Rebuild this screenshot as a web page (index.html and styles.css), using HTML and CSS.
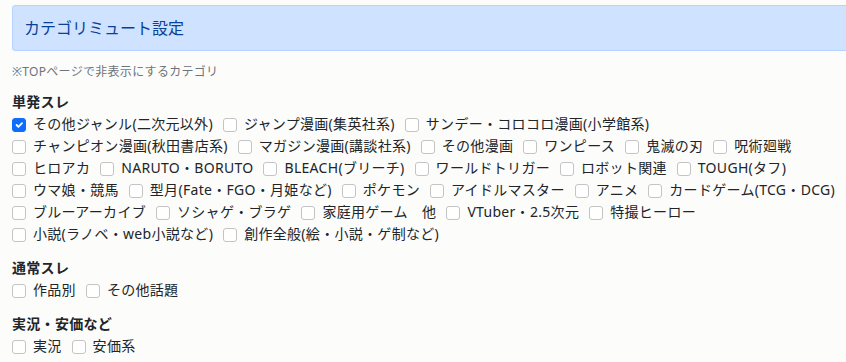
FILE: index.html
```html
<!DOCTYPE html>
<html>
<head>
  <title>カテゴリミュート設定</title>
  <link rel="stylesheet" href="styles.css">
</head>
<body>
  <div id="mute-settings">
    <div class="title-box">カテゴリミュート設定</div>
    <p class="note">※TOPページで非表示にするカテゴリ</p>

    <div class="group">
      <h2>単発スレ</h2>
      <div class="options">
        <label class="opt"><input type="checkbox" checked>その他ジャンル(二次元以外)</label>
        <label class="opt"><input type="checkbox">ジャンプ漫画(集英社系)</label>
        <label class="opt"><input type="checkbox">サンデー・コロコロ漫画(小学館系)</label>
        <label class="opt"><input type="checkbox">チャンピオン漫画(秋田書店系)</label>
        <label class="opt"><input type="checkbox">マガジン漫画(講談社系)</label>
        <label class="opt"><input type="checkbox">その他漫画</label>
        <label class="opt"><input type="checkbox">ワンピース</label>
        <label class="opt"><input type="checkbox">鬼滅の刃</label>
        <label class="opt"><input type="checkbox">呪術廻戦</label>
        <label class="opt"><input type="checkbox">ヒロアカ</label>
        <label class="opt"><input type="checkbox">NARUTO・BORUTO</label>
        <label class="opt"><input type="checkbox">BLEACH(ブリーチ)</label>
        <label class="opt"><input type="checkbox">ワールドトリガー</label>
        <label class="opt"><input type="checkbox">ロボット関連</label>
        <label class="opt"><input type="checkbox">TOUGH(タフ)</label>
        <label class="opt"><input type="checkbox">ウマ娘・競馬</label>
        <label class="opt"><input type="checkbox">型月(Fate・FGO・月姫など)</label>
        <label class="opt"><input type="checkbox">ポケモン</label>
        <label class="opt"><input type="checkbox">アイドルマスター</label>
        <label class="opt"><input type="checkbox">アニメ</label>
        <label class="opt"><input type="checkbox">カードゲーム(TCG・DCG)</label>
        <label class="opt"><input type="checkbox">ブルーアーカイブ</label>
        <label class="opt"><input type="checkbox">ソシャゲ・ブラゲ</label>
        <label class="opt"><input type="checkbox">家庭用ゲーム　他</label>
        <label class="opt"><input type="checkbox">VTuber・2.5次元</label>
        <label class="opt"><input type="checkbox">特撮ヒーロー</label>
        <label class="opt"><input type="checkbox">小説(ラノベ・web小説など)</label>
        <label class="opt"><input type="checkbox">創作全般(絵・小説・ゲ制など)</label>
      </div>
    </div>

    <div class="group">
      <h2>通常スレ</h2>
      <div class="options">
        <label class="opt"><input type="checkbox">作品別</label>
        <label class="opt"><input type="checkbox">その他話題</label>
      </div>
    </div>

    <div class="group">
      <h2>実況・安価など</h2>
      <div class="options">
        <label class="opt"><input type="checkbox">実況</label>
        <label class="opt"><input type="checkbox">安価系</label>
      </div>
    </div>
  </div>
</body>
</html>
```

FILE: styles.css
```css
body {
  margin: 0;
  background-color: #fcfcfa;
  color: #212529;
  font-family: "Noto Sans", "Noto Sans CJK JP", sans-serif;
  font-size: 14px;
  letter-spacing: 0.3px;
  overflow: hidden;
}
#mute-settings {
  padding: 5px 4px 0 12px;
}
.title-box {
  height: 44px;
  margin-right: -30px;
  padding: 0 11px;
  line-height: 44px;
  font-size: 16px;
  letter-spacing: 0;
  color: #084298;
  background-color: #cfe2ff;
  border: 1px solid #b6d4fe;
  border-radius: 3px;
}
.note {
  margin: 12px 0 0;
  line-height: 18px;
  font-size: 12px;
  color: #6c757d;
}
.group {
  margin-top: 10px;
}
.group + .group {
  margin-top: 12px;
}
.group h2 {
  margin: 0;
  line-height: 22px;
  font-size: 14px;
  font-weight: bold;
}
.options {
  display: flex;
  flex-wrap: wrap;
  column-gap: 10px;
}
.opt {
  display: flex;
  align-items: center;
  line-height: 22px;
  white-space: nowrap;
}
.opt input {
  appearance: none;
  width: 14px;
  height: 14px;
  margin: 1px 7px 0 0;
  background-color: #fff;
  border: 1px solid #c4c4c4;
  border-radius: 3px;
}
.opt input:checked {
  background-color: #0d6efd;
  border-color: #0d6efd;
  background-image: url("data:image/svg+xml,%3csvg xmlns='http://www.w3.org/2000/svg' viewBox='0 0 20 20'%3e%3cpath fill='none' stroke='%23fff' stroke-linecap='round' stroke-linejoin='round' stroke-width='3' d='m6 10 3 3 6-6'/%3e%3c/svg%3e");
  background-size: 100% 100%;
}
```
